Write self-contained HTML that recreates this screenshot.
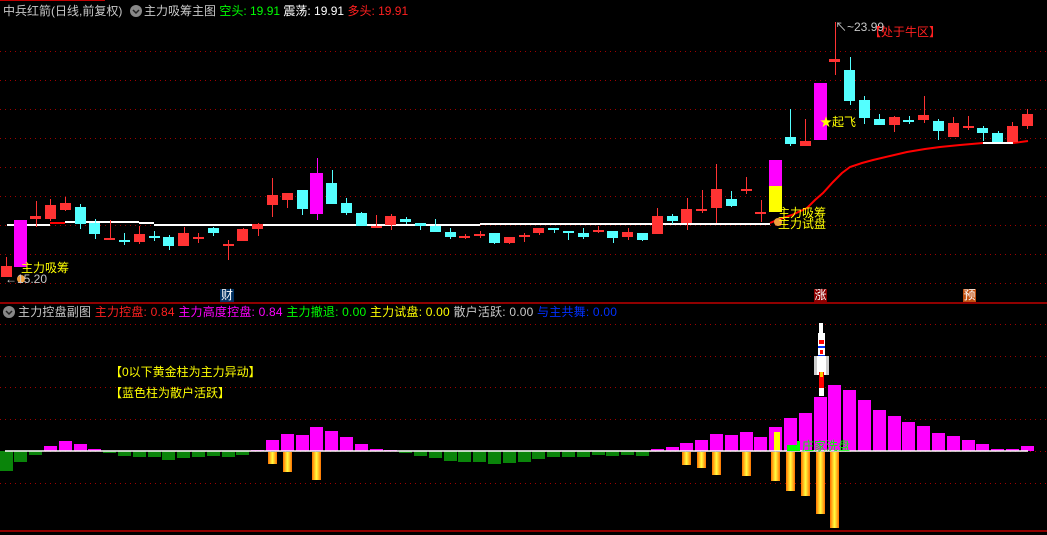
<!DOCTYPE html>
<html><head><meta charset="utf-8"><style>
html,body{margin:0;padding:0;background:#000;}
body{width:1047px;height:535px;position:relative;overflow:hidden;font-family:"Liberation Sans","Noto Sans CJK SC",sans-serif;font-size:12px;}
.t{position:absolute;white-space:nowrap;line-height:14px;}
svg{position:absolute;left:0;top:0;}
</style></head><body>
<svg id="s" width="1047" height="535" viewBox="0 0 1047 535"></svg>

<div class="t" style="left:3px;top:4px;color:#c8c8c8">中兵红箭(日线,前复权)</div>
<div class="t" style="left:144px;top:4px;color:#c8c8c8">主力吸筹主图 <span style="color:#00ff00">空头: 19.91</span> <span style="color:#fff">震荡: 19.91</span> <span style="color:#ff2020">多头: 19.91</span></div>

<div class="t" style="left:18px;top:305px;color:#c8c8c8;letter-spacing:0.2px">主力控盘副图 <span style="color:#ff2020">主力控盘: 0.84</span> <span style="color:#ff00ff">主力高度控盘: 0.84</span> <span style="color:#00ff00">主力撤退: 0.00</span> <span style="color:#ffff00">主力试盘: 0.00</span> <span style="color:#c8c8c8">散户活跃: 0.00</span> <span style="color:#0030ff">与主共舞: 0.00</span></div>

<div class="t" style="left:21px;top:261px;color:#ffff00">主力吸筹</div>
<div class="t" style="left:5px;top:272px;color:#c8c8c8">←15.20</div>
<div class="t" style="left:778px;top:206px;color:#ffff00">主力吸筹</div>
<div class="t" style="left:778px;top:217px;color:#ffff00">主力试盘</div>
<div class="t" style="left:820px;top:115px;color:#ffff00">★起飞</div>
<div class="t" style="left:835px;top:20px;color:#c8c8c8">↖~23.99</div>
<div class="t" style="left:869px;top:25px;color:#ff2020">【处于牛区】</div>

<div class="t" style="left:220px;top:289px;width:14px;height:13px;background:#003060;color:#fff;text-align:center;line-height:13px">财</div>
<div class="t" style="left:814px;top:289px;width:13px;height:13px;background:#8b0000;color:#fff;text-align:center;line-height:13px">涨</div>
<div class="t" style="left:963px;top:289px;width:13px;height:13px;background:#c05010;color:#fff;text-align:center;line-height:13px">预</div>

<div class="t" style="left:110px;top:365px;color:#ffff00">【0以下黄金柱为主力异动】</div>
<div class="t" style="left:110px;top:386px;color:#ffff00">【蓝色柱为散户活跃】</div>
<div class="t" style="left:802px;top:439px;color:#00ff00">庄家洗盘</div>

<script>
var s=document.getElementById('s');var h='';
function R(x,y,w,hh,c){h+='<rect x="'+x+'" y="'+y+'" width="'+w+'" height="'+hh+'" fill="'+c+'"/>';}
function L(x1,y1,x2,y2,c,w,d){h+='<line x1="'+x1+'" y1="'+y1+'" x2="'+x2+'" y2="'+y2+'" stroke="'+c+'" stroke-width="'+(w||1)+'"'+(d?' stroke-dasharray="'+d+'"':'')+'/>';}
L(0,0.5,105,0.5,'#c00000');
L(0,303,1047,303,'#c00000',1.5);
L(0,531,1047,531,'#c00000',1.5);
[51,80,109,138,167,196,225,254,283].forEach(function(y){L(0,y+.5,1047,y+.5,'#a00000',1,'1 4');});
[324,356,387,419,483].forEach(function(y){L(0,y+.5,1047,y+.5,'#a00000',1,'1 4');});
L(0,451.5,1047,451.5,'#a00000',1,'1 4');
h+='<circle cx="136" cy="11" r="6" fill="#888"/><path d="M133 10 L136 13 L139 10" stroke="#222" stroke-width="1.5" fill="none"/>';
h+='<circle cx="9" cy="312" r="6" fill="#888"/><path d="M6 311 L9 314 L12 311" stroke="#222" stroke-width="1.5" fill="none"/>';
var C={r:'#ff3333',c:'#54ffff',m:'#ff00ff'};
var d=[['r',266,277,257,277],['m',220,267,220,267],['r',216,219,201,227],['r',205,219,199,221],['r',203,210,197,211],['c',207,224,204,229],['c',223,234,219,239],['r',238,239,220,239],['c',240,241,233,245],['r',234,242,226,244],['c',236,237,231,241],['c',237,246,235,250],['r',233,246,227,246],['r',237,238,233,243],['c',228,233,227,236],['r',244,245,240,260],['r',229,241,228,241],['r',224,229,223,236],['r',195,205,178,217],['r',193,200,193,208],['c',190,209,190,215],['m',173,214,158,220],['c',183,204,170,204],['c',203,213,198,215],['c',213,226,212,226],['r',226,227,215,227],['r',216,225,214,230],['c',219,222,217,224],['c',223,226,223,230],['c',226,232,219,232],['c',232,237,228,239],['r',236,237,234,239],['r',234,236,231,238],['c',233,243,233,244],['r',237,243,237,244],['r',235,237,233,242],['r',228,233,228,235],['c',228,230,228,233],['c',231,233,231,240],['c',233,237,228,239],['r',230,231,226,233],['c',231,238,231,243],['r',232,237,228,240],['c',233,240,233,241],['r',216,234,208,234],['c',216,221,214,224],['r',209,223,198,230],['r',209,210,190,213],['r',189,208,164,223],['c',199,206,191,207],['r',189,190,177,194],['r',212,213,200,222],['y',160,212,160,212],['c',137,144,109,146],['r',141,146,119,146],['m',83,140,83,140],['r',59,62,22,75],['c',70,101,57,105],['c',100,118,96,124],['c',119,125,114,125],['r',117,125,116,132],['c',120,121,116,124],['r',115,120,96,123],['c',121,131,119,140],['r',123,137,117,137],['r',126,127,116,130],['c',128,133,126,141],['c',133,142,131,142],['r',126,142,122,142],['r',114,126,109,129]];
L(7,225,50,225,'#fff',2);L(50,223,65,223,'#ff0000',2);L(65,222,139,222,'#fff',2);L(139,223,154,223,'#fff',2);L(154,225,480,225,'#fff',2);L(480,224,770,224,'#fff',2);
h+='<polyline points="770,223 777,220 792,215 807,208 815,200 823,193 833,182 842,173 850,167 862,163 873,160 890,156 907,152 925,149 940,147 960,145 983,143" fill="none" stroke="#ff0000" stroke-width="2"/>';
L(983,143,1013,143,'#fff',2);L(1013,143,1028,141,'#ff0000',2);
d.forEach(function(a,i){var cx=6+14.8*i,x=Math.round(cx-5.5);
 if(a[0]=='y'){R(x-1,160,13,26,'#ff00ff');R(x-1,186,13,26,'#ffff00');return;}
 var col=C[a[0]];
 L(Math.round(cx)+.5,a[3],Math.round(cx)+.5,a[4],col,1);
 var bh=a[2]-a[1];if(bh<2)bh=2;
 var w=a[0]=='m'?13:11; if(a[0]=='m')x-=1;
 R(x,a[1],w,bh,col);});
h+='<circle cx="21" cy="279" r="4" fill="#f0a040"/><circle cx="778" cy="222" r="4" fill="#f0a040"/>';
var b=[-471,-462,-455,446,441,444,449,-453,-456,-457,-457,-460,-458,-457,-456,-457,-455,450,440,434,435,427,431,437,444,449,450,-453,-456,-458,-461,-462,-462,-464,-463,-462,-459,-457,-457,-457,-455,-456,-455,-456,449,447,443,440,434,435,432,437,427,418,413,397,385,390,400,410,416,422,426,433,436,440,444,449,449,446];
var g={18:464,19:472,21:480,46:465,47:468,48:475,50:476,52:481,53:491,54:496,55:514,56:528};
h+='<defs><linearGradient id="gd" x1="0" x2="1"><stop offset="0" stop-color="#ff7000"/><stop offset=".5" stop-color="#ffff40"/><stop offset="1" stop-color="#ff7000"/></linearGradient></defs>';
b.forEach(function(v,i){var cx=6+14.8*i,x=Math.round(cx-6.5);
 if(v<0){R(x,451,13,-v-451,'#0a840a');}else{R(x,v,13,451-v,'#ff00ff');}
 if(g[i])R(Math.round(cx-4.5),452,9,g[i]-452,'url(#gd)');});
R(774,432,6,19,'#ffff00');
L(5,451,1028,451,'#fff',1.5);
R(787,445,13,6,'#00ff00');R(797,441,3,4,'#00ff00');
R(819,323,4,12,'#fff');R(818,333,7,25,'#fff');R(814,356,15,19,'#ccc');R(817,356,9,19,'#fff');
R(819,340,5,4,'#ff0000');R(818,346,7,2,'#0030ff');R(820,350,3,4,'#ff0000');R(818,355,7,1,'#0030ff');
R(819,372,5,16,'#ff0000');R(820,372,3,5,'#ffcc00');R(819,388,5,8,'#fff');
s.innerHTML=h;
</script>
</body></html>
